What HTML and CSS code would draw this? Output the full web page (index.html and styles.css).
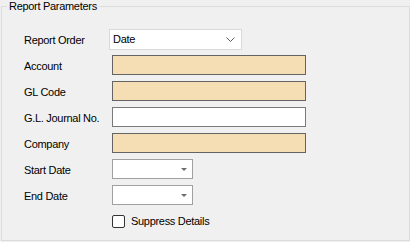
FILE: index.html
```html
<!DOCTYPE html>
<html lang="en">
<head>
    <meta charset="UTF-8">
    <title>Report Parameters</title>
    <link rel="stylesheet" href="styles.css">
</head>
<body>
    <div class="group">
        <div class="group-title">Report Parameters</div>
        <div class="form-grid">
            <label class="field-label">Report Order</label>
            <div class="combo">
                <span>Date</span>
                <svg class="chevron" width="9" height="5" viewBox="0 0 9 5">
                    <path d="M0.5 0.5 L4.5 4.5 L8.5 0.5" fill="none" stroke="#5a5a5a" stroke-width="1"/>
                </svg>
            </div>

            <label class="field-label">Account</label>
            <div class="textbox wheat"></div>

            <label class="field-label">GL Code</label>
            <div class="textbox wheat"></div>

            <label class="field-label">G.L. Journal No.</label>
            <div class="textbox"></div>

            <label class="field-label">Company</label>
            <div class="textbox wheat"></div>

            <label class="field-label">Start Date</label>
            <div class="datebox"><span class="arrow"></span></div>

            <label class="field-label">End Date</label>
            <div class="datebox"><span class="arrow"></span></div>

            <div></div>
            <label class="check-row">
                <span class="checkbox"></span>
                <span>Suppress Details</span>
            </label>
        </div>
    </div>
</body>
</html>
```

FILE: styles.css
```css
body {
    margin: 0;
    background-color: #f0f0f0;
    font-family: 'Liberation Sans', Arial, sans-serif;
    font-size: 11px;
    letter-spacing: -0.3px;
    color: #000000;
}

.group {
    position: relative;
    margin: 6px 0 1px 1px;
    width: 407px;
    height: 233px;
    border: 1px solid #dcdcdc;
}

.group-title {
    position: absolute;
    top: -7px;
    left: 5px;
    padding: 0 2px;
    line-height: 13px;
    background-color: #f0f0f0;
}

.form-grid {
    display: grid;
    grid-template-columns: 88px 1fr;
    grid-auto-rows: 26px;
    align-items: center;
    padding: 19px 0 0 22px;
}

.field-label {
    padding-top: 2px;
    line-height: 13px;
}

.combo {
    display: flex;
    align-items: center;
    justify-content: space-between;
    box-sizing: border-box;
    width: 133px;
    height: 21px;
    margin-left: -3px;
    padding: 0 6px 0 3px;
    background-color: #ffffff;
    border: 1px solid #d9d9d9;
}

.textbox {
    box-sizing: border-box;
    width: 194px;
    height: 20px;
    background-color: #ffffff;
    border: 1px solid #7a7a7a;
}

.textbox.wheat {
    background-color: #f5deb3;
    border-color: #646464;
}

.datebox {
    position: relative;
    box-sizing: border-box;
    width: 81px;
    height: 20px;
    background-color: #ffffff;
    border: 1px solid #a0a0a0;
}

.datebox .arrow {
    position: absolute;
    top: 8px;
    right: 5px;
    width: 0;
    height: 0;
    border-left: 3px solid transparent;
    border-right: 3px solid transparent;
    border-top: 3px solid #6d6d6d;
}

.check-row {
    display: flex;
    align-items: center;
    gap: 6px;
}

.checkbox {
    box-sizing: border-box;
    width: 13px;
    height: 13px;
    border: 1px solid #333333;
    border-radius: 2px;
    background-color: #ffffff;
}
```
